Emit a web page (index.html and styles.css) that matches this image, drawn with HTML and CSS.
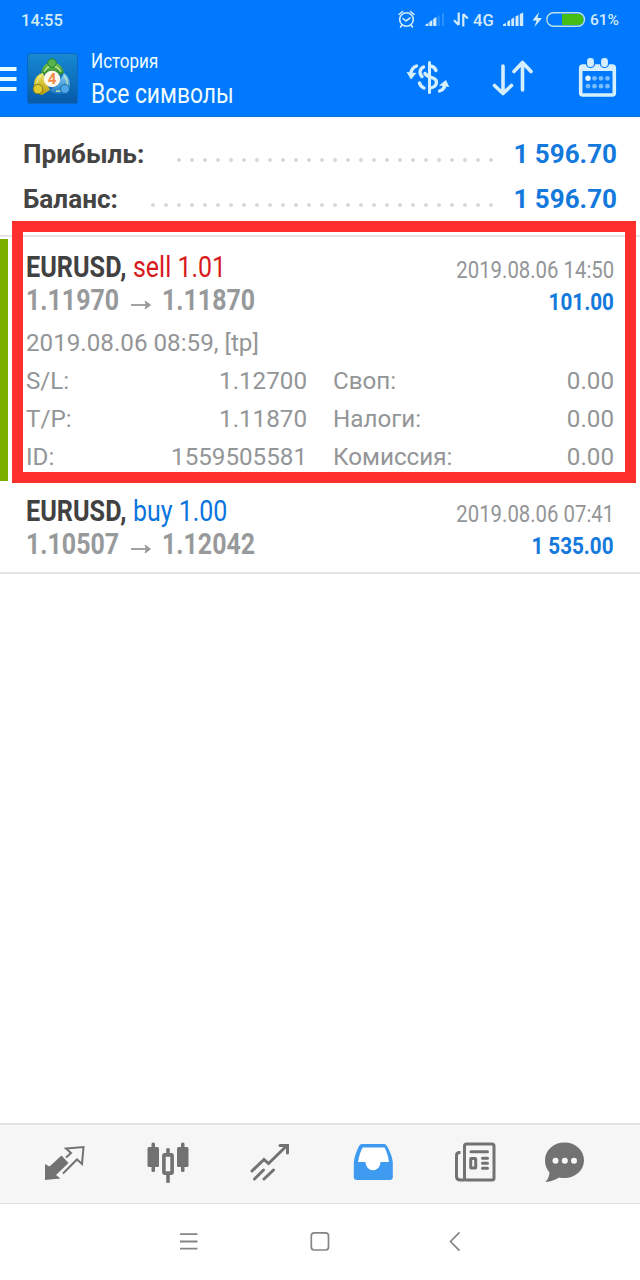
FILE: index.html
```html
<!DOCTYPE html>
<html lang="ru">
<head>
<meta charset="utf-8">
<title>История</title>
<link rel="stylesheet" href="styles.css">
</head>
<body>
<div class="screen">
  <header class="top">
    <div class="status">
      <span class="clock">14:55</span>
      <svg class="status-icons" width="190" height="24" viewBox="397 8 190 24">
        <g fill="none" stroke="#d3ebf8" stroke-width="1.6" stroke-linecap="round">
          <circle cx="406.500" cy="19.500" r="6.800"/>
          <path d="M403 18.500l3 2.500 4-3M399 14.500l3.500-3M414 14.500l-3.500-3M402 25l-1.500 2M411 25l1.500 2"/>
        </g>
        <path fill="#d3ebf8" d="M425.500 26v-1.500l3-1.500v3zM429.300 26v-4l3-2v6zM433.200 26v-7l3.200-2v9z"/>
        <path fill="#2b90fa" d="M437.700 26v-10l2-1V26zM442 26V13.500l2-1V26z"/>
        <path fill="none" stroke="#d3ebf8" stroke-width="2.200" d="M458.700 12.500V25M454 20.300l4.700 4.700M463.300 26.500V14M463.300 14l4.500 4.500"/>
        <text class="net" x="473" y="26">4G</text>
        <path fill="#d3ebf8" d="M503 26v-1.500l3-1.500v3zM507.300 26v-4.500l2.800-1.500v6zM511.300 26v-7l2.800-1.500V26zM515.500 26v-9.500l3-1.500v11zM519.800 26V14l3.400-1.500V26z"/>
        <path fill="#d3ebf8" d="M539 12l-6.500 8.500h4l-2 6.500 7.500-9h-4.500z"/>
        <rect x="563" y="14" width="20.500" height="11" rx="5" fill="#45bd14"/>
        <rect x="562" y="14" width="10" height="11" fill="#45bd14"/>
        <rect x="546.800" y="12.800" width="37.700" height="13.400" rx="6.700" fill="none" stroke="#b9e2e4" stroke-width="1.400"/>
      </svg>
      <span class="percent">61%</span>
    </div>
    <div class="appbar">
      <svg class="menu" width="17" height="26" viewBox="0 0 17 26"><path fill="#e8fbff" d="M0 1h16.500v4H0zM0 11h16.500v4H0zM0 21h16.500v4H0z"/></svg>
      <svg class="logo" width="52" height="52" viewBox="0 0 52 52">
        <defs>
          <linearGradient id="tile" x2="0" y2="1"><stop stop-color="#1789d2"/><stop offset="1" stop-color="#075aa8"/></linearGradient>
          <linearGradient id="green" x2="0" y2="1"><stop stop-color="#7ccb43"/><stop offset="1" stop-color="#207e35"/></linearGradient>
          <linearGradient id="gold" x2="0" y2="1"><stop stop-color="#f3e458"/><stop offset="1" stop-color="#b79b10"/></linearGradient>
          <linearGradient id="azure" x2="0" y2="1"><stop stop-color="#8bd5f5"/><stop offset="1" stop-color="#1c75c4"/></linearGradient>
        </defs>
        <rect x=".5" y=".5" width="50" height="50" rx="2.500" fill="url(#tile)" stroke="#0c67c6"/>
        <path d="M14 20c1-7 6-11 11-11s11 4 12 11l-6 3H19z" fill="url(#green)"/>
        <path d="M7 32c0-7 4-11 9-12l3 9 4 8-8 5c-5-1-8-5-8-10z" fill="url(#gold)"/>
        <path d="M37 20c4 3 6 7 6 13-1 5-5 8-10 8-4 0-8-1-10-4l8-6z" fill="url(#azure)"/>
        <path d="M17 19c2-4 4-6 8-6s7 2 9 6M10 31c0-4 2-7 6-9M29 38c5 1 8-1 10-5M37 23c2 2 4 6 3 10" fill="none" stroke="#dcf4b1" stroke-width="1.300" opacity=".8"/>
        <circle cx="25" cy="10" r="4.300" fill="#54b34b" stroke="#247e41"/>
        <circle cx="11" cy="36" r="4.800" fill="#dccb31" stroke="#897e16"/>
        <circle cx="38" cy="36" r="4.500" fill="#4fa6e5" stroke="#1767a9"/>
        <circle cx="25" cy="26" r="8.300" fill="#fff8ef"/>
        <text class="four" x="25" y="31.300" text-anchor="middle">4</text>
      </svg>
      <div class="titles">
        <div class="title-small"><span class="fit fit-history">История</span></div>
        <div class="title-big"><span class="fit fit-symbols">Все символы</span></div>
      </div>
      <svg class="actions" width="220" height="48" viewBox="400 54 220 48">
        <g fill="none" stroke="#d5efff" stroke-width="3.400" stroke-linecap="round">
          <path stroke-width="3" d="M429.500 62.500v30"/>
          <path d="M423.500 67c-4 2-4.500 6.500-1.500 9.500M419.500 83c.8 2.500 2 4 4.500 5M430 66c3 .2 5 2 6 4.500M425 73.500c2 3 5 3.500 8 4.500 5 2 5 8.500-3 10"/>
          <path d="M416.500 66c-3 1-4.500 3-5.500 6M439.500 91c3-1 5-3 5.500-6"/>
        </g>
        <path fill="#d5efff" d="M406.500 72l10 1-5.500 6.500zM439 85.500l7-5.500 3.300 7z"/>
        <path fill="none" stroke="#d5efff" stroke-width="3.600" stroke-linecap="round" stroke-linejoin="round" d="M503 66v27M494.500 85.500L503 93.500l8.500-8M522.500 90V63M514 71.500l8.500-9 8.500 9"/>
        <rect x="580.700" y="66" width="33.600" height="29" rx="2" fill="none" stroke="#d5efff" stroke-width="3.600"/>
        <path fill="#d5efff" d="M581 66h33v5h-33z"/>
        <g fill="#d5efff" stroke="#0079fe" stroke-width="1.200"><rect x="586.500" y="57.500" width="8" height="10" rx="3.800"/><rect x="600.500" y="57.500" width="8" height="10" rx="3.800"/></g>
        <circle cx="588" cy="78.300" r="2.700" fill="#e6f6ff"/>
        <g fill="#78bcff"><circle cx="594.500" cy="78.300" r="2.400"/><circle cx="601" cy="78.300" r="2.400"/><circle cx="607.500" cy="78.300" r="2.400"/><circle cx="588" cy="86.200" r="2.400"/><circle cx="594.500" cy="86.200" r="2.400"/><circle cx="601" cy="86.200" r="2.400"/><circle cx="607.500" cy="86.200" r="2.400"/></g>
      </svg>
    </div>
  </header>

  <section class="summary">
    <div class="sum-row"><span class="label label-profit"><span class="fit">Прибыль:</span></span><span class="dots dots-profit"></span><b class="total">1 596.70</b></div>
    <div class="sum-row"><span class="label label-balance"><span class="fit">Баланс:</span></span><span class="dots dots-balance"></span><b class="total">1 596.70</b></div>
  </section>

  <main class="deals">
    <article class="deal deal-open">
      <div class="head">
        <div class="left">
          <div class="line"><span class="fit symbol">EURUSD,</span><span class="fit side sell">sell 1.01</span></div>
          <div class="line prices"><span class="fit price">1.11970</span><svg class="arrow" width="20" height="12" viewBox="0 0 20 12"><path d="M0 6h18" stroke="#97999b" stroke-width="1.800"/><path d="M14 2l5.500 4-5.500 4 1.500-4z" fill="#97999b" stroke="#97999b"/></svg><span class="fit price">1.11870</span></div>
        </div>
        <div class="right">
          <div class="date"><span class="fit">2019.08.06 14:50</span></div>
          <div class="gain"><span class="fit">101.00</span></div>
        </div>
      </div>
      <div class="details">
        <div class="opened">2019.08.06 08:59, [tp]</div>
        <div class="pairs">
          <span>S/L:</span><span class="value">1.12700</span><span class="second">Своп:</span><span class="value">0.00</span>
          <span>T/P:</span><span class="value">1.11870</span><span class="second">Налоги:</span><span class="value">0.00</span>
          <span>ID:</span><span class="value">1559505581</span><span class="second">Комиссия:</span><span class="value">0.00</span>
        </div>
      </div>
      <div class="highlight"></div>
    </article>
    <article class="deal deal-closed">
      <div class="head">
        <div class="left">
          <div class="line"><span class="fit symbol">EURUSD,</span><span class="fit side buy">buy 1.00</span></div>
          <div class="line prices"><span class="fit price">1.10507</span><svg class="arrow" width="20" height="12" viewBox="0 0 20 12"><path d="M0 6h18" stroke="#97999b" stroke-width="1.800"/><path d="M14 2l5.500 4-5.500 4 1.500-4z" fill="#97999b" stroke="#97999b"/></svg><span class="fit price">1.12042</span></div>
        </div>
        <div class="right">
          <div class="date"><span class="fit">2019.08.06 07:41</span></div>
          <div class="gain"><span class="fit">1 535.00</span></div>
        </div>
      </div>
    </article>
  </main>

  <nav class="tabs">
    <svg width="44" height="42" viewBox="43 1141 44 42"><path fill="#727272" d="M45 1164l4.500 2.500L61.500 1155.500l7 7.500-12.500 12 4.500 3.500-15.500 1.500z"/><path fill="none" stroke="#727272" stroke-width="2" d="M66 1157.500l5-4.500-5-4.500 17.500-1.500-1.500 17-5-4.500-14 14"/></svg>
    <svg width="44" height="42" viewBox="145 1141 44 42"><g fill="#727272"><rect x="146.500" y="1147" width="11.500" height="20" rx="1.500"/><rect x="150.500" y="1142.500" width="3.500" height="29.500" rx="1.500"/><rect x="176" y="1147" width="11.500" height="20" rx="1.500"/><rect x="180" y="1142.500" width="3.500" height="29.500" rx="1.500"/><rect x="165.200" y="1148" width="3.600" height="7" rx="1.500"/><rect x="165.200" y="1172" width="3.600" height="11" rx="1.500"/></g><rect x="162.900" y="1154.900" width="8.200" height="18.200" rx=".5" fill="none" stroke="#727272" stroke-width="3.600"/></svg>
    <svg width="44" height="42" viewBox="248 1141 44 42"><path fill="none" stroke="#727272" stroke-width="3" stroke-linecap="round" d="M252 1171l12-11.500 4.500 4 18.500-18M280 1145.500h7.500v7.500M254.500 1179l9-9M264 1179l9.500-9"/></svg>
    <svg width="44" height="42" viewBox="350 1141 44 42"><path fill="#3f9bef" d="M361 1144h22q2 0 3 2 5 9 5.800 16v15q0 3-3 3h-33q-3 0-3-3v-15q.8-7 5.200-16 1-2 3-2z"/><path fill="#fff" d="M361.700 1147.500q-3 5-4.700 14.500h7.500c.7 11 14.500 11 15 0h8.500q-1.500-9.500-4.500-14.500z"/></svg>
    <svg width="44" height="42" viewBox="453 1141 44 42"><g fill="none" stroke="#727272" stroke-width="3"><rect x="464.500" y="1144" width="29.500" height="36" rx="2"/><path d="M460.500 1152.500h-1q-3 0-3 3v21q0 3.500 4 3.500h4"/><path stroke-linecap="round" d="M471 1151.700h16.500M482.500 1158.300h5M482.500 1163.300h5M482.500 1168.300h5"/><rect x="470.700" y="1158.500" width="5" height="9.500" rx=".5"/></g></svg>
    <svg width="44" height="42" viewBox="543 1141 44 42"><path fill="#727272" d="M564.500 1142.500c11 0 19.500 7.700 19.500 18 0 10-9 17.500-19.500 17.500-2.500 0-4-.2-5.500-.6-4 2.500-8 4.100-13.500 4.600 2.500-3 4-6.500 4-9.500-3-3.500-4.500-7.500-4.500-12 0-10.300 8.500-18 19.500-18z"/><g fill="#f7f7f7"><circle cx="555.500" cy="1160.800" r="3"/><circle cx="564.800" cy="1160.800" r="3"/><circle cx="574" cy="1160.800" r="3"/></g></svg>
  </nav>
  <footer class="softkeys">
    <svg width="20" height="24" viewBox="179 1229 20 24"><path stroke="#858585" stroke-width="1.800" d="M180 1234.200h17.500M180 1241.500h17.500M180 1248.700h17.500"/></svg>
    <svg width="20" height="24" viewBox="310 1229 20 24"><rect x="311.300" y="1232.800" width="17.200" height="17.200" rx="3" fill="none" stroke="#858585" stroke-width="1.700"/></svg>
    <svg width="14" height="24" viewBox="448 1229 14 24"><path fill="none" stroke="#858585" stroke-width="1.700" d="M459.500 1232.300l-9 9.200 9 9.200"/></svg>
  </footer>
</div>
</body>
</html>
```

FILE: styles.css
```css
body {
  margin: 0;
  background: #fff;
  font-family: Roboto, "Liberation Sans", sans-serif;
  white-space: nowrap;
}

.screen {
  display: flex;
  flex-direction: column;
  width: 640px;
  height: 1280px;
  overflow: hidden;
}

.screen svg { display: block; flex: none; }

/* Condensed text: glyphs are narrowed from one edge. */
.fit {
  display: inline-block;
  transform-origin: 0 50%;
}

/* Header */
.top {
  height: 117px;
  box-sizing: border-box;
  background: #0079fe;
  border-bottom: 1px solid #0871d8;
}

.status {
  display: flex;
  height: 40px;
  line-height: 41px;
  padding-left: 21px;
  color: #d3ebf8;
  font-size: 16.500px;
  font-weight: 500;
}

.clock { width: 376px; }
.status-icons { margin-top: 8px; }
.percent { margin-left: 3px; font-size: 15.500px; }
.net { fill: #d3ebf8; font-size: 16.500px; font-weight: 500; }

.appbar { display: flex; height: 76px; }
.menu { margin-top: 26px; }
.logo { margin: 13px 0 0 10px; }
.four { fill: #f08a45; font-size: 15px; font-weight: 700; }
.titles { width: 309px; margin-left: 12px; padding-top: 6px; color: #eefbff; }
.title-small { height: 30px; line-height: 30px; font-size: 21px; }
.title-big { height: 36px; line-height: 36px; font-size: 27px; }
.fit-history { transform: scaleX(.81); }
.fit-symbols { transform: scaleX(.845); }
.actions { margin-top: 14px; }

/* Totals */
.summary {
  height: 103px;
  padding-top: 15px;
  border-bottom: 2px solid #e8e5e8;
}

.sum-row {
  display: flex;
  height: 45px;
  line-height: 45px;
  padding: 0 23px;
  font-size: 26px;
}

.label { color: #444; font-weight: 700; }
.label .fit { transform: scaleX(1.005); }
.label-profit { width: 150px; }
.label-balance { width: 124px; }

.dots {
  height: 4px;
  margin-top: 26px;
  background: radial-gradient(circle at 6px 2px, #d9d9d9 1.600px, transparent 2.200px) 0 0 / 13px 4px repeat-x;
}
.dots-profit { width: 325px; }
.dots-balance { width: 351px; }
.total { margin-left: auto; color: #1479dc; }

/* Deals */
.deals { flex: 1; }
.deal { position: relative; padding: 14px 26px 0; }
.deal-open { height: 229px; }
.deal-open::before {
  content: "";
  position: absolute;
  left: 0;
  top: 2px;
  width: 8px;
  height: 242px;
  background: #7bb000;
}
.deal-closed { height: 77px; padding-top: 15px; border-bottom: 2px solid #e5e5e5; }

.head { display: flex; justify-content: space-between; height: 66px; }
.line { display: flex; height: 33px; line-height: 33px; font-size: 29px; align-items: center; }
.symbol { width: 107px; color: #414141; font-weight: 700; transform: scaleX(.87); }
.side { transform: scaleX(.86); }
.sell { color: #d71920; }
.buy { color: #0a74dd; }
.price { width: 104px; color: #97999b; font-weight: 700; transform: scaleX(.86); }
.arrow { margin: 8px 11px 0 1px; }

.right { width: 200px; text-align: right; }
.right .fit { transform-origin: 100% 50%; }
.date { height: 33px; line-height: 38px; font-size: 24.500px; color: #939597; }
.date .fit { transform: scaleX(.83); }
.gain { height: 33px; line-height: 36px; font-size: 24px; font-weight: 700; color: #1479dc; }
.gain .fit { transform: scaleX(.86); }

.details {
  margin-top: 7px;
  color: #939597;
  font-size: 24.200px;
  line-height: 38px;
}
.opened { height: 38px; }
.pairs { display: grid; grid-template-columns: 80px 201px 160px 147px; grid-auto-rows: 38px; }
.value { text-align: right; }
.second { padding-left: 26px; }

.highlight {
  position: absolute;
  left: 12px;
  top: -16px;
  width: 602px;
  height: 240px;
  border: 11px solid #fd302e;
}

/* Bottom tabs */
.tabs {
  display: flex;
  gap: 58.500px;
  height: 81px;
  padding: 16px 0 0 43px;
  box-sizing: border-box;
  background: #f6f6f6;
  border-top: 2px solid #e2e2e2;
  border-bottom: 1px solid #e2e2e2;
}
.tabs svg:last-child { margin-left: -12.500px; }

.softkeys {
  display: flex;
  height: 76px;
  padding: 25px 0 0 179px;
  box-sizing: border-box;
}
.softkeys svg + svg { margin-left: 111px; }
.softkeys svg + svg + svg { margin-left: 118px; }
```
